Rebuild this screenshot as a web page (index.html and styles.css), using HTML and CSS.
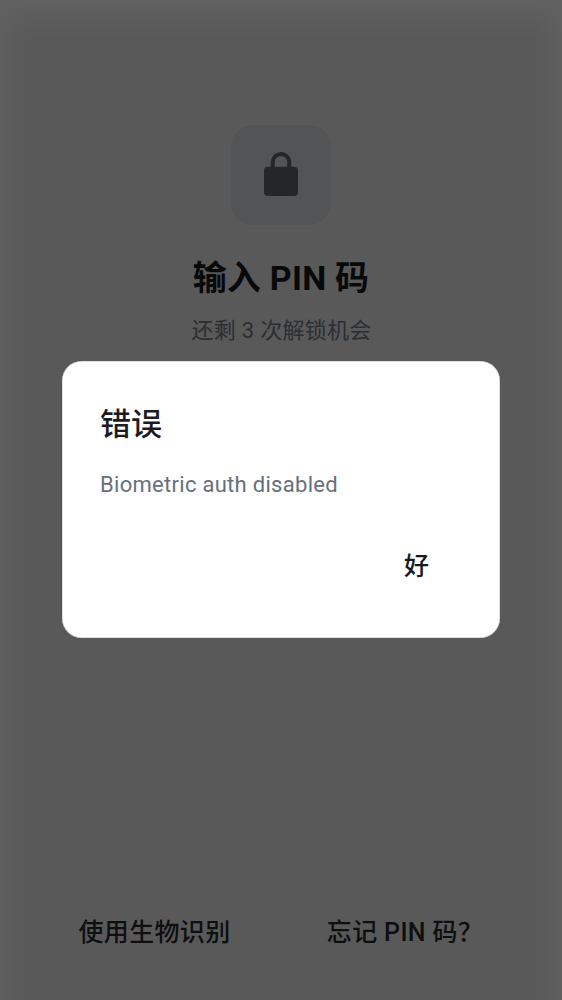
FILE: index.html
```
<!DOCTYPE html>
<html lang="zh-CN">
<head>
<meta charset="utf-8">
<title>输入 PIN 码</title>
<link rel="stylesheet" href="styles.css">
</head>
<body>
<main class="screen">
  <header class="intro">
    <div class="lock-tile">
      <svg class="lock" viewBox="0 0 34 44" aria-hidden="true">
        <path d="M8.7 16V10.3a8.3 8.3 0 0 1 16.6 0V16" fill="none" stroke="currentColor" stroke-width="4"/>
        <rect y="14.8" width="34" height="29.2" rx="4" fill="currentColor"/>
      </svg>
    </div>
    <h1 class="title">输入 PIN 码</h1>
    <p class="attempts">还剩 3 次解锁机会</p>
  </header>
  <footer class="actions">
    <button class="action">使用生物识别</button>
    <button class="action">忘记 PIN 码？</button>
  </footer>
</main>
<div class="overlay">
  <section class="dialog" role="alertdialog">
    <h2 class="dialog-title">错误</h2>
    <p class="dialog-text">Biometric auth disabled</p>
    <div class="dialog-actions"><button class="confirm">好</button></div>
  </section>
</div>
</body>
</html>
```
FILE: styles.css
```
* { box-sizing: border-box; margin: 0; padding: 0; }
body {
  font-family: Roboto, "Noto Sans CJK SC", sans-serif;
  background: #595959;
}
button { font: inherit; color: inherit; background: none; border: 0; }
.screen {
  height: 1000px;
  display: flex;
  flex-direction: column;
  justify-content: space-between;
  padding: 125px 0 45px;
  background:
    linear-gradient(to bottom, #606060, rgba(96, 96, 96, 0) 38px),
    linear-gradient(to right, #5f5f5f, rgba(95, 95, 95, 0) 26px, rgba(95, 95, 95, 0) 536px, #5f5f5f),
    #595959;
}
.intro { display: flex; flex-direction: column; align-items: center; }
.lock-tile {
  width: 100px;
  height: 100px;
  border-radius: 22px;
  background: #535456;
  display: flex;
  justify-content: center;
  padding-top: 27px;
}
.lock { width: 34px; height: 44px; color: #232729; }
.title {
  margin-top: 29px;
  font-size: 34px;
  line-height: 48px;
  font-weight: 700;
  letter-spacing: 0.25px;
  color: #08090b;
}
.attempts {
  margin-top: 13px;
  padding-left: 1px;
  font-size: 22px;
  line-height: 32px;
  letter-spacing: 0.25px;
  color: #2b2e32;
}
.actions { display: grid; grid-template-columns: 253px 248px; padding: 0 28px; }
.action {
  font-size: 25px;
  line-height: 44px;
  font-weight: 500;
  letter-spacing: 0.35px;
  color: #0e0f11;
  white-space: nowrap;
}
.overlay {
  position: absolute;
  inset: 0;
  display: flex;
  align-items: center;
  justify-content: center;
  padding-bottom: 1px;
}
.dialog {
  width: 438px;
  height: 277px;
  border-radius: 20px;
  background: #fff;
  box-shadow: inset 0 0 0 0.5px #bdbdbd;
  padding: 38px;
}
.dialog-title { font-size: 31px; line-height: 52px; font-weight: 500; color: #1b1b23; }
.dialog-text {
  margin-top: 18px;
  font-size: 22px;
  line-height: 32px;
  letter-spacing: 0.29px;
  color: #66707b;
}
.dialog-actions { display: flex; justify-content: flex-end; margin-top: 42px; padding-right: 33px; }
.confirm { font-size: 25px; line-height: 48px; font-weight: 500; color: #181920; }
```
